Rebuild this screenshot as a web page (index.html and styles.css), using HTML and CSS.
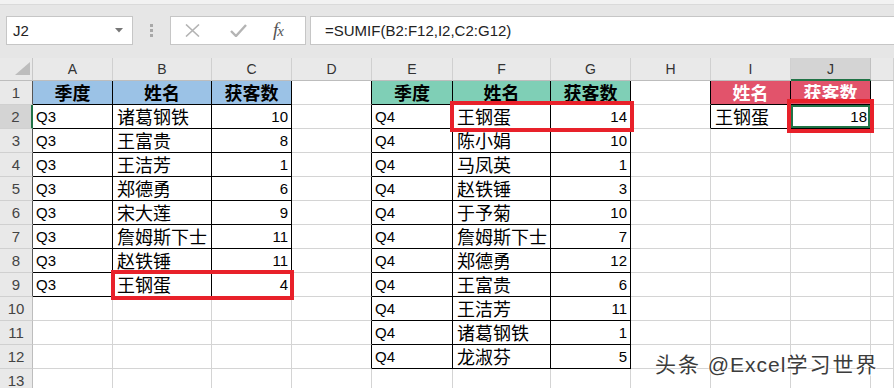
FILE: index.html
```html
<!DOCTYPE html>
<html>
<head>
<meta charset="utf-8">
<link rel="stylesheet" href="styles.css">
</head>
<body>
<div class="app">
  <div class="topstrip"></div>
  <div class="fbar">
    <div class="namebox"><span>J2</span><svg class="caret" width="8" height="5" viewBox="0 0 8 5"><path d="M0 0h8L4 4.5z" fill="#777"/></svg></div>
    <div class="dots"><i></i><i></i><i></i></div>
    <div class="btns">
      <svg class="ix" width="15" height="13" viewBox="0 0 15 13"><path d="M1 0.5L14 12.5M14 0.5L1 12.5" stroke="#b4b4b4" stroke-width="1.6" fill="none"/></svg>
      <svg class="iv" width="17" height="13" viewBox="0 0 17 13"><path d="M1 7L6 12L16 1" stroke="#b4b4b4" stroke-width="2.4" fill="none"/></svg>
      <span class="fx">f<span class="fxx">x</span></span>
    </div>
    <div class="formula">=SUMIF(B2:F12,I2,C2:G12)</div>
  </div>
  <div class="sheet">
    <div class="corner"><svg width="33" height="22" viewBox="0 0 33 22"><path d="M30 4V17H15z" fill="#bdbdbd"/></svg></div>
    <div class="ch">A</div><div class="ch">B</div><div class="ch">C</div><div class="ch">D</div><div class="ch">E</div><div class="ch">F</div><div class="ch">G</div><div class="ch">H</div><div class="ch">I</div><div class="ch sel">J</div><div class="ch"></div>

    <div class="rh rk">1</div>
    <div class="c k h blue">季度</div><div class="c k h blue">姓名</div><div class="c k h blue">获客数</div><div class="c rk"></div>
    <div class="c k h green">季度</div><div class="c k h green">姓名</div><div class="c k h green">获客数</div><div class="c rk"></div>
    <div class="c k h red">姓名</div><div class="c k h red">获客数</div><div class="c"></div>

    <div class="rh rk sel">2</div>
    <div class="c k">Q3</div><div class="c k z">诸葛钢铁</div><div class="c k n">10</div><div class="c rk"></div>
    <div class="c k">Q4</div><div class="c k z">王钢蛋</div><div class="c k n">14</div><div class="c rk"></div>
    <div class="c k z">王钢蛋</div><div class="c k n sel2">18</div><div class="c"></div>

    <div class="rh rk">3</div>
    <div class="c k">Q3</div><div class="c k z">王富贵</div><div class="c k n">8</div><div class="c rk"></div>
    <div class="c k">Q4</div><div class="c k z">陈小娟</div><div class="c k n">10</div><div class="c"></div>
    <div class="c"></div><div class="c"></div><div class="c"></div>

    <div class="rh rk">4</div>
    <div class="c k">Q3</div><div class="c k z">王洁芳</div><div class="c k n">1</div><div class="c rk"></div>
    <div class="c k">Q4</div><div class="c k z">马凤英</div><div class="c k n">1</div><div class="c"></div>
    <div class="c"></div><div class="c"></div><div class="c"></div>

    <div class="rh rk">5</div>
    <div class="c k">Q3</div><div class="c k z">郑德勇</div><div class="c k n">6</div><div class="c rk"></div>
    <div class="c k">Q4</div><div class="c k z">赵铁锤</div><div class="c k n">3</div><div class="c"></div>
    <div class="c"></div><div class="c"></div><div class="c"></div>

    <div class="rh rk">6</div>
    <div class="c k">Q3</div><div class="c k z">宋大莲</div><div class="c k n">9</div><div class="c rk"></div>
    <div class="c k">Q4</div><div class="c k z">于予菊</div><div class="c k n">10</div><div class="c"></div>
    <div class="c"></div><div class="c"></div><div class="c"></div>

    <div class="rh rk">7</div>
    <div class="c k">Q3</div><div class="c k z">詹姆斯下士</div><div class="c k n">11</div><div class="c rk"></div>
    <div class="c k">Q4</div><div class="c k z">詹姆斯下士</div><div class="c k n">7</div><div class="c"></div>
    <div class="c"></div><div class="c"></div><div class="c"></div>

    <div class="rh rk">8</div>
    <div class="c k">Q3</div><div class="c k z">赵铁锤</div><div class="c k n">11</div><div class="c rk"></div>
    <div class="c k">Q4</div><div class="c k z">郑德勇</div><div class="c k n">12</div><div class="c"></div>
    <div class="c"></div><div class="c"></div><div class="c"></div>

    <div class="rh rk">9</div>
    <div class="c k">Q3</div><div class="c k z">王钢蛋</div><div class="c k n">4</div><div class="c rk"></div>
    <div class="c k">Q4</div><div class="c k z">王富贵</div><div class="c k n">6</div><div class="c"></div>
    <div class="c"></div><div class="c"></div><div class="c"></div>

    <div class="rh">10</div>
    <div class="c"></div><div class="c"></div><div class="c"></div><div class="c rk"></div>
    <div class="c k">Q4</div><div class="c k z">王洁芳</div><div class="c k n">11</div><div class="c"></div>
    <div class="c"></div><div class="c"></div><div class="c"></div>

    <div class="rh">11</div>
    <div class="c"></div><div class="c"></div><div class="c"></div><div class="c rk"></div>
    <div class="c k">Q4</div><div class="c k z">诸葛钢铁</div><div class="c k n">1</div><div class="c"></div>
    <div class="c"></div><div class="c"></div><div class="c"></div>

    <div class="rh">12</div>
    <div class="c"></div><div class="c"></div><div class="c"></div><div class="c rk"></div>
    <div class="c k">Q4</div><div class="c k z">龙淑芬</div><div class="c k n">5</div><div class="c"></div>
    <div class="c"></div><div class="c"></div><div class="c"></div>

    <div class="rh">13</div>
    <div class="c"></div><div class="c"></div><div class="c"></div><div class="c"></div>
    <div class="c"></div><div class="c"></div><div class="c"></div><div class="c"></div>
    <div class="c"></div><div class="c"></div><div class="c"></div>

    <div class="redbox rb1"></div>
    <div class="redbox rb2"></div>
    <div class="redbox rb3"></div>
    <div class="watermark">头条 <span class="wl">@Excel</span>学习世界</div>
  </div>
</div>
</body>
</html>
```
FILE: styles.css
```css
html, body {
  margin: 0;
  padding: 0;
}
body {
  width: 894px;
  height: 388px;
  overflow: hidden;
  background: #e6e6e6;
  font-family: "Liberation Sans", Arial, sans-serif;
}
.app {
  width: 894px;
}
.topstrip {
  height: 4px;
  background: #f2f2f2;
  border-bottom: 1px solid #dadada;
}
.fbar {
  margin-top: 11px;
  height: 29px;
  display: flex;
  padding-left: 6px;
}
.namebox {
  box-sizing: border-box;
  width: 127px;
  height: 29px;
  background: #fff;
  border: 1px solid #c6c6c6;
  display: flex;
  align-items: center;
  justify-content: space-between;
  padding: 0 9px 0 6px;
  font-size: 15px;
  color: #222;
}
.caret {
  display: block;
}
.dots {
  margin-left: 17px;
  width: 3px;
  display: flex;
  flex-direction: column;
  justify-content: center;
  gap: 2px;
}
.dots i {
  display: block;
  width: 3px;
  height: 3px;
  background: #a8a8a8;
}
.btns {
  box-sizing: border-box;
  margin-left: 17px;
  width: 136px;
  height: 29px;
  background: #fff;
  border: 1px solid #c6c6c6;
  display: flex;
  align-items: center;
}
.ix {
  margin-left: 14px;
  display: block;
}
.iv {
  margin-left: 30px;
  display: block;
}
.fx {
  margin-left: 26px;
  font-family: "Liberation Serif", serif;
  font-style: italic;
  font-size: 19px;
  color: #555;
  line-height: 20px;
  letter-spacing: -1px;
}
.fxx {
  font-size: 15px;
}
.formula {
  box-sizing: border-box;
  margin-left: 4px;
  flex: 1;
  height: 29px;
  background: #fff;
  border: 1px solid #c6c6c6;
  border-right: none;
  padding-left: 14px;
  font-size: 15px;
  line-height: 27px;
  color: #222;
}
.sheet {
  position: relative;
  margin-top: 13px;
  display: grid;
  grid-template-columns: 33px 80px 99px 80px 80px 81px 98px 80px 80px 80px 80px 23px;
  grid-template-rows: 23px;
  grid-auto-rows: 24px;
  background: #fff;
}
.sheet > div {
  box-sizing: border-box;
}
.corner {
  background: #e9e9e9;
  border-right: 1px solid #c8c8c8;
  border-bottom: 1px solid #bdbdbd;
}
.corner svg {
  display: block;
}
.ch {
  background: #e9e9e9;
  border-right: 1px solid #d0d0d0;
  border-bottom: 1px solid #bdbdbd;
  text-align: center;
  font-size: 14px;
  line-height: 22px;
  color: #333;
}
.ch.sel {
  background: #d4d4d4;
  border-bottom: 2px solid #217346;
  border-right-color: #c0c0c0;
}
.rh {
  background: #e9e9e9;
  border-right: 1px solid #bdbdbd;
  border-bottom: 1px solid #d0d0d0;
  text-align: center;
  font-size: 15px;
  line-height: 23px;
  color: #444;
}
.rh.rk {
  border-right-color: #555;
}
.rh.sel {
  background: #d4d4d4;
  border-right: 2px solid #217346;
}
.c {
  border-right: 1px solid #d4d4d4;
  border-bottom: 1px solid #d4d4d4;
  padding: 0 3px;
  font-size: 15px;
  line-height: 23px;
  color: #000;
  white-space: nowrap;
}
.c.rk {
  border-right-color: #000;
}
.c.k {
  border-right-color: #000;
  border-bottom-color: #000;
}
.z {
  font-family: "Noto Sans CJK SC", sans-serif;
  font-size: 18px;
  padding-left: 4px;
}
.n {
  text-align: right;
}
.h {
  font-family: "Noto Sans CJK SC", sans-serif;
  font-weight: bold;
  font-size: 18px;
  text-align: center;
}
.blue {
  background: #9bc2e6;
}
.green {
  background: #7fcfb6;
}
.red {
  background: #e2536b;
  color: #fff;
}
.sel2 {
  box-shadow: inset 0 0 0 2px #217346;
}
.redbox {
  position: absolute;
  box-sizing: border-box;
  border: 4px solid #e8212a;
}
.rb1 {
  left: 111px;
  top: 212px;
  width: 183px;
  height: 30px;
}
.rb2 {
  left: 450px;
  top: 43px;
  width: 184px;
  height: 31px;
}
.rb3 {
  left: 787px;
  top: 41px;
  width: 87px;
  height: 34px;
}
.watermark {
  position: absolute;
  left: 655px;
  top: 292px;
  font-family: "Noto Sans CJK SC", sans-serif;
  font-size: 21px;
  line-height: 26px;
  color: #3c3c3c;
  letter-spacing: 2px;
  white-space: nowrap;
  text-shadow: 0 0 2px #fff, 0 0 2px #fff, 1px 1px 0 #fff;
}
.wl {
  font-family: "Liberation Sans", Arial, sans-serif;
  letter-spacing: 1px;
}
```
